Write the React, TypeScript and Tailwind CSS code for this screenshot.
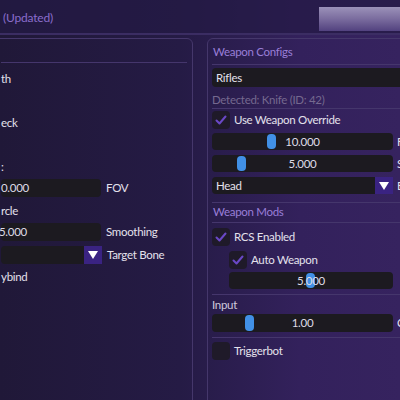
import type { ReactNode } from 'react'

const font = { fontFamily: 'Lato, "Noto Sans", sans-serif' }

const txt = 'text-[11.5px] tracking-[-0.3px]'

function Separator() {
  return <div className="h-px w-full bg-[#45366c]" />
}

function Check({ checked }: { checked: boolean }) {
  return (
    <div className="flex h-[18px] w-[18px] shrink-0 items-center justify-center rounded-[4px] bg-[#1f1a29]">
      {checked && (
        <svg width="14" height="14" viewBox="0 0 14 14">
          <path d="M2.5 7.5 L5.5 10.5 L11.5 3.5" fill="none" stroke="#6a48c6" strokeWidth="2" strokeLinecap="round" strokeLinejoin="round" />
        </svg>
      )}
    </div>
  )
}

function CheckRow({ checked, label, className = '' }: { checked: boolean; label: string; className?: string }) {
  return (
    <div className={`flex h-[18px] items-center gap-[4px] ${className}`}>
      <Check checked={checked} />
      <span className="text-[11.5px] tracking-[-0.3px] text-[#e4e1ec]">{label}</span>
    </div>
  )
}

function Arrow() {
  return (
    <div className="flex h-full w-[18px] shrink-0 items-center justify-center bg-[#3a2382]">
      <svg width="10" height="8" viewBox="0 0 10 8">
        <path d="M0 0 L10 0 L5 8 Z" fill="#ffffff" />
      </svg>
    </div>
  )
}

function Slider({ value, grab, width, label, className = '' }: { value: string; grab: number; width: number; label?: string; className?: string }) {
  return (
    <div className={`flex h-[17px] items-center ${className}`}>
      <div className="relative flex h-full shrink-0 items-center justify-center rounded-[4px] bg-[#1c1a20]" style={{ width }}>
        <div className="absolute top-[1px] bottom-[1px] w-[9px] rounded-[4px] bg-[#4190e6]" style={{ left: grab }} />
        <span className="relative text-[11.5px] tracking-[-0.3px] text-[#dedbe6]">{value}</span>
      </div>
      {label && <span className="ml-[4px] text-[11.5px] tracking-[-0.3px] text-[#e4e1ec]">{label}</span>}
    </div>
  )
}

function Frame({ children, className = '' }: { children: ReactNode; className?: string }) {
  return <div className={`flex items-center rounded-[4px] bg-[#1c1a20] ${className}`}>{children}</div>
}

function LeftText({ children, className = '' }: { children: ReactNode; className?: string }) {
  return <div className={`flex h-[18px] items-center text-[11.5px] tracking-[-0.3px] text-[#e4e1ec] ${className}`}>{children}</div>
}

export default function App() {
  return (
    <div
      className="relative flex h-[400px] w-[400px] flex-col overflow-hidden bg-[linear-gradient(90deg,#201838_0%,#251b45_45%,#33215c_75%,#36235f_100%)]"
      style={font}
    >
      {/* title bar */}
      <div className="flex h-[33px] shrink-0 items-center justify-between bg-[#241a44]/70">
        <span className="pl-[3px] pt-[3px] text-[12px] tracking-[-0.2px] text-[#8a6dcc]">(Updated)</span>
        <div className="mt-[5px] h-[24px] w-[81px] bg-[linear-gradient(180deg,#9b91b9_0%,#7a6c9e_50%,#52427f_100%)]" />
      </div>
      <div className="h-[2px] shrink-0 bg-[#3b2d63]" />

      <div className="mt-[3px] flex gap-[14px]">
        {/* left panel */}
        <div className="ml-[-10px] flex h-[380px] w-[203px] shrink-0 flex-col rounded-[6px] border border-[#45376b] pl-[10px] pr-[5px]">
          <div className="h-[23px]" />
          <Separator />
          <LeftText className="mt-[7px]">th</LeftText>
          <LeftText className="mt-[4px]">{''}</LeftText>
          <LeftText className="mt-[4px]">eck</LeftText>
          <LeftText className="mt-[4px]">{''}</LeftText>
          <LeftText className="mt-[4px]">:</LeftText>
          <div className="mt-[3px] flex h-[18px] items-center">
            <Frame className="h-full w-[100px]">
              <span className={`${txt} text-[#dedbe6]`}>0.000</span>
            </Frame>
            <span className={`ml-[5px] ${txt} text-[#e4e1ec]`}>FOV</span>
          </div>
          <LeftText className="mt-[5px]">rcle</LeftText>
          <div className="mt-[3px] flex h-[18px] items-center">
            <Frame className="h-full w-[100px]">
              <span className={`ml-[-2px] ${txt} text-[#dedbe6]`}>5.000</span>
            </Frame>
            <span className={`ml-[5px] ${txt} text-[#e4e1ec]`}>Smoothing</span>
          </div>
          <div className="mt-[5px] flex h-[18px] items-center">
            <div className="h-full w-[83px] rounded-l-[4px] bg-[#1c1a20]" />
            <Arrow />
            <span className={`ml-[5px] ${txt} text-[#e4e1ec]`}>Target Bone</span>
          </div>
          <LeftText className="mt-[4px]">ybind</LeftText>
        </div>

        {/* right panel */}
        <div className="flex h-[380px] w-[290px] shrink-0 flex-col rounded-[6px] border border-[#45376b] pl-[4px] pr-[6px]">
          <div className={`mt-[4px] flex h-[18px] items-center pl-[1px] ${txt} text-[#997ed8]`}>Weapon Configs</div>
          <div className="mt-[3px]"><Separator /></div>
          <Frame className="mt-[3px] h-[19px] w-full pl-[4px]">
            <span className={`${txt} text-[#e4e1ec]`}>Rifles</span>
          </Frame>
          <div className={`mt-[5px] flex h-[16px] items-center ${txt} text-[#75698f]`}>Detected: Knife (ID: 42)</div>
          <Separator />
          <CheckRow checked label="Use Weapon Override" className="mt-[2px]" />
          <Slider value="10.000" grab={55} width={181} label="F" className="mt-[4px]" />
          <Slider value="5.000" grab={25} width={181} label="S" className="mt-[5px]" />
          <div className="mt-[5px] flex h-[17px] items-center">
            <div className="flex h-full w-[163px] items-center rounded-l-[4px] bg-[#1c1a20] pl-[4px]">
              <span className={`${txt} text-[#e4e1ec]`}>Head</span>
            </div>
            <Arrow />
            <span className={`ml-[4px] ${txt} text-[#e4e1ec]`}>B</span>
          </div>
          <div className="mt-[8px]"><Separator /></div>
          <div className={`flex h-[18px] items-center pl-[1px] ${txt} text-[#997ed8]`}>Weapon Mods</div>
          <div className="mt-[1px]"><Separator /></div>
          <CheckRow checked label="RCS Enabled" className="mt-[5px]" />
          <CheckRow checked label="Auto Weapon" className="mt-[5px] ml-[17px]" />
          <Slider value="5.000" grab={77} width={164} className="mt-[3px] ml-[17px]" />
          <div className="mt-[5px]"><Separator /></div>
          <div className={`mt-[2px] flex h-[16px] items-center ${txt} text-[#cfc9dc]`}>Input</div>
          <Slider value="1.00" grab={33} width={181} label="C" className="mt-[1px] h-[18px]" />
          <div className="mt-[5px]"><Separator /></div>
          <CheckRow checked={false} label="Triggerbot" className="mt-[4px]" />
        </div>
      </div>
    </div>
  )
}
